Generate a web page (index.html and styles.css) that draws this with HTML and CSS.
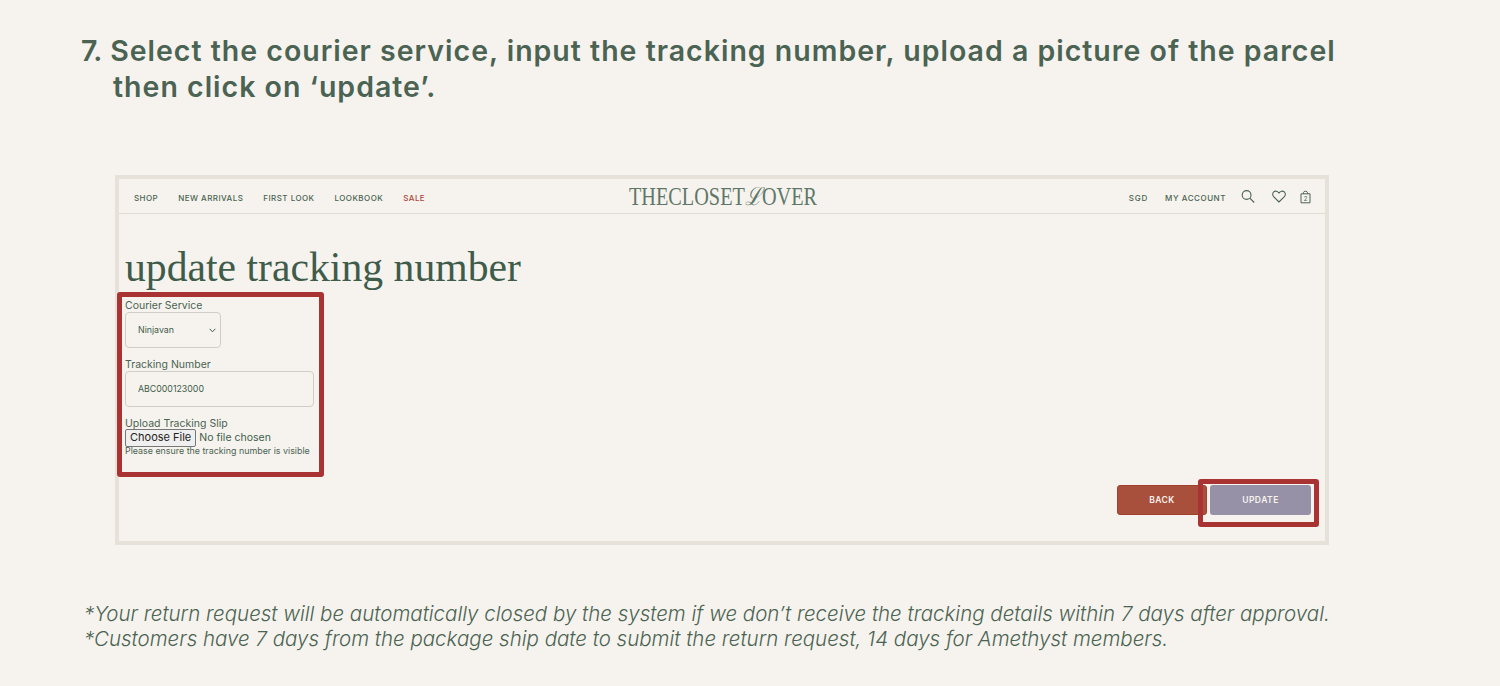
FILE: index.html
```html
<!DOCTYPE html>
<html lang="en">
  <head>
    <meta charset="UTF-8" />
    <meta name="viewport" content="width=device-width, initial-scale=1.0" />
    <title>Update Tracking Number</title>
    <link rel="stylesheet" href="styles.css">
  </head>
  <body>
    <h2 class="step">
      <span class="step-line"><span class="step-no">7.</span> Select the courier service, input the tracking number, upload a picture of the parcel</span>
      <span class="step-line step-indent">then click on ‘update’.</span>
    </h2>

    <div class="frame">
      <nav class="site-nav">
        <div class="nav-links">
          <a href="#">Shop</a>
          <a href="#">New Arrivals</a>
          <a href="#">First Look</a>
          <a href="#">Lookbook</a>
          <a href="#" class="sale">Sale</a>
        </div>
        <a href="#" class="logo">THECLOSET<span class="logo-l">ℒ</span>OVER</a>
        <div class="nav-right">
          <a href="#" class="nav-sgd">SGD</a>
          <a href="#" class="nav-account">My Account</a>
          <svg class="icon icon-search" width="14" height="13" viewBox="0 0 14 13" fill="none" stroke="#4b6353" stroke-width="1.1">
            <circle cx="5.6" cy="5" r="4.4" />
            <path d="M8.8 8.2L13.2 12.5" />
          </svg>
          <svg class="icon icon-heart" width="14" height="13" viewBox="0 0 14 13" fill="none" stroke="#4b6353" stroke-width="1.1">
            <path d="M7 12L1.6 6.600C.2 5.100.5 3 1.700 1.900 3.200.7 5.600.9 7 3 8.400.9 10.800.7 12.300 1.900 13.500 3 13.800 5.100 12.400 6.600Z" />
          </svg>
          <svg class="icon icon-bag" width="11" height="14" viewBox="0 0 11 14" fill="none" stroke="#4b6353" stroke-width="1">
            <path d="M1 3.800H10V12.800H1Z" />
            <path d="M3.500 3.800V2.500C3.500 .8 7.500 .8 7.500 2.500V3.800" />
            <text x="5.500" y="11" text-anchor="middle" class="bag-count">2</text>
          </svg>
        </div>
      </nav>

      <div class="frame-body">
        <h1 class="page-title">update tracking number</h1>

        <form class="tracking-form">
          <label class="field-label">Courier Service</label>
          <select class="field-select">
            <option>Ninjavan</option>
          </select>

          <label class="field-label">Tracking Number</label>
          <input type="text" class="field-input" value="ABC000123000" />

          <label class="field-label">Upload Tracking Slip</label>
          <input type="file" class="field-file" />
          <p class="field-help">Please ensure the tracking number is visible</p>
          <div class="highlight highlight-form"></div>
        </form>

        <div class="actions">
          <button type="button" class="btn btn-back">Back</button>
          <button type="button" class="btn btn-update">Update</button>
          <div class="highlight highlight-update"></div>
        </div>
      </div>
    </div>

    <div class="notes">
      <p>*Your return request will be automatically closed by the system if we don’t receive the tracking details within 7 days after approval.</p>
      <p>*Customers have 7 days from the package ship date to submit the return request, 14 days for Amethyst members.</p>
    </div>
  </body>
</html>
```

FILE: styles.css
```css
body {
  margin: 0;
  padding: 33px 0 0 0;
  background-color: #f6f3ee;
  color: #4b6353;
  font-family: "Inter", sans-serif;
  height: 653px;
  overflow: hidden;
}

.step {
  margin: 0 0 0 81px;
  font-size: 28.5px;
  font-weight: 600;
  line-height: 36px;
  letter-spacing: 1px;
}

.step-no {
  letter-spacing: -0.5px;
}

.step-line {
  display: block;
  white-space: nowrap;
}

.step-indent {
  margin-left: 32px;
}

.frame {
  box-sizing: border-box;
  width: 1214px;
  height: 370px;
  margin: 70px 0 0 115px;
  border: 4px solid #e6e2d9;
}

.site-nav {
  box-sizing: border-box;
  height: 35px;
  display: flex;
  justify-content: space-between;
  align-items: center;
  padding: 3px 14px 0 15px;
  border-bottom: 1px solid #dedcd4;
  position: relative;
}

.site-nav a {
  text-decoration: none;
  color: #4b6353;
  font-size: 8px;
  font-weight: 500;
  letter-spacing: 0.45px;
  text-transform: uppercase;
}

.nav-links {
  display: flex;
  gap: 20px;
}

.site-nav .sale {
  color: #a9483a;
}

.site-nav .logo {
  position: absolute;
  left: 510px;
  top: 4px;
  font-family: "Liberation Serif", serif;
  font-size: 25px;
  font-weight: 400;
  letter-spacing: 0;
  line-height: 28px;
  color: #5f7768;
  transform: scaleX(0.81);
  transform-origin: left center;
}

.logo-l {
  font-family: "DejaVu Serif", serif;
  font-style: italic;
}

.nav-right {
  display: flex;
  align-items: center;
}

.site-nav .nav-sgd {
  letter-spacing: 0.8px;
}

.site-nav .nav-account {
  margin-left: 17px;
  letter-spacing: 0.55px;
}

.nav-right .icon {
  margin-top: -2px;
}

.icon-search {
  margin-left: 15px;
}

.icon-heart {
  margin-left: 17px;
}

.icon-bag {
  margin-left: 14px;
}

.bag-count {
  font-size: 6px;
  fill: #4b6353;
  stroke: none;
  font-family: "Inter", sans-serif;
}

.frame-body {
  position: relative;
  padding: 29px 0 0 6px;
}

.page-title {
  margin: 0;
  font-family: "Liberation Serif", serif;
  font-size: 41.7px;
  font-weight: 400;
  line-height: 48px;
  color: #3f5c4b;
}

.tracking-form {
  position: relative;
  display: flex;
  flex-direction: column;
  align-items: flex-start;
  margin-top: 7px;
}

.field-label {
  padding-top: 1px;
  margin-bottom: -1px;
  font-size: 10.5px;
  line-height: 14px;
}

.field-select,
.field-input {
  box-sizing: border-box;
  height: 36px;
  margin-bottom: 9px;
  padding: 0 12px 2px 12px;
  border: 1px solid #cfcec4;
  border-radius: 4px;
  background-color: #f6f3ee;
  color: #3f5c4b;
  font-family: "Inter", sans-serif;
  font-size: 8.8px;
}

.field-select {
  width: 96px;
  appearance: none;
  background-image: url("data:image/svg+xml,%3Csvg xmlns='http://www.w3.org/2000/svg' width='7' height='5'%3E%3Cpath d='M.7 .8L3.500 3.800 6.300 .8' fill='none' stroke='%233f5c4b' stroke-width='1'/%3E%3C/svg%3E");
  background-repeat: no-repeat;
  background-position: right 4px center;
}

.field-input {
  width: 189px;
}

.field-file {
  width: 190px;
  margin-top: -1px;
  font-family: "Inter", sans-serif;
  font-size: 10.5px;
  color: #3f5c4b;
}

.field-file::file-selector-button {
  margin-right: 3px;
  padding: 0 4px 2px 4px;
  border: 1px solid #777;
  border-radius: 2px;
  background-color: #efefef;
  color: #222;
  font-family: "Inter", sans-serif;
  font-size: 11px;
}

.field-help {
  margin: -2px 0 0 0;
  font-size: 8.9px;
  line-height: 12px;
}

.highlight {
  position: absolute;
  box-sizing: border-box;
  border: 5px solid #a93232;
  border-radius: 3px;
}

.highlight-form {
  left: -8px;
  top: -6px;
  width: 207px;
  height: 185px;
}

.actions {
  position: absolute;
  right: 14px;
  top: 271px;
  display: flex;
  gap: 3px;
}

.btn {
  height: 30px;
  border: 1px solid transparent;
  border-radius: 3px;
  color: #f6f3ee;
  font-family: "Inter", sans-serif;
  font-size: 8.5px;
  font-weight: 600;
  letter-spacing: 0.5px;
  text-transform: uppercase;
}

.btn-back {
  width: 90px;
  background-color: #a8503c;
  border-color: #a0402f;
}

.btn-update {
  width: 101px;
  background-color: #9691a6;
}

.highlight-update {
  left: 81px;
  top: -6px;
  width: 121px;
  height: 48px;
}

.notes {
  margin: 56px 0 0 84px;
  font-family: "Inter", sans-serif;
  font-size: 20.5px;
  font-weight: 300;
  font-style: italic;
  line-height: 25px;
  white-space: nowrap;
}

.notes p {
  margin: 0;
}
```
